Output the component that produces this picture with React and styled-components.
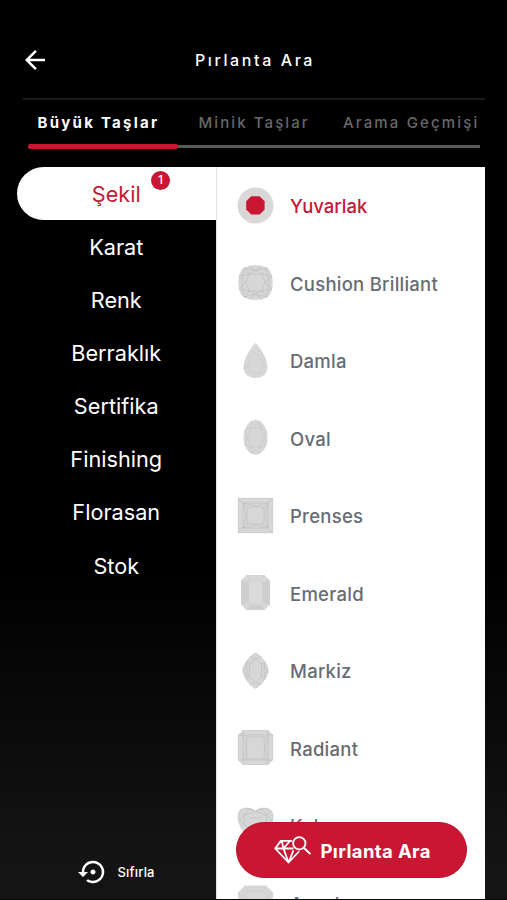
import React from "react";
import styled, { createGlobalStyle, css } from "styled-components";
import { MdArrowBack, MdSettingsBackupRestore } from "react-icons/md";

const RED = "#c91733";

const GlobalStyle = createGlobalStyle`
  * { box-sizing: border-box; }
  html, body { margin: 0; background: #000; overflow: hidden; }
  button { border: 0; padding: 0; background: none; color: inherit; font: inherit; }
`;

const Screen = styled.div`
  width: 100%;
  height: 900px;
  display: flex;
  flex-direction: column;
  overflow: hidden;
  color: #fff;
  background: linear-gradient(#000 0, #000 570px, #141414 860px);
  border-bottom: 1px solid #0a0a0a;
  font-family: Inter, "Liberation Sans", sans-serif;
`;

const Header = styled.header`
  flex: none;
  height: 100px;
  margin: 0 22px 0 23px;
  padding-top: 21px;
  display: grid;
  grid-template-columns: 30px 1fr 30px;
  align-items: center;
  border-bottom: 2px solid #1b1b1b;
`;

const BackButton = styled.button`
  display: flex;
  margin-left: -3px;
`;

const Title = styled.h1`
  margin: 0 -2px 0 0;
  text-align: center;
  font-size: 16px;
  line-height: 20px;
  font-weight: 500;
  letter-spacing: 2.6px;
`;

const Tabs = styled.nav`
  flex: none;
  height: 44px;
  display: flex;
  align-items: center;
  padding: 2px 0 0 37.5px;
`;

const Tab = styled.button`
  flex: none;
  width: ${(p) => p.$width}px;
  text-align: left;
  white-space: nowrap;
  font-size: 15px;
  line-height: 20px;
  font-weight: ${(p) => (p.$active ? 700 : 500)};
  letter-spacing: ${(p) => p.$spacing}px;
  color: ${(p) => (p.$active ? "#fff" : "#686868")};
`;

const TabTrack = styled.div`
  flex: none;
  height: 5px;
  margin: 0 27px 17.5px 28px;
  display: flex;
  align-items: center;
`;

const TabIndicator = styled.div`
  width: 150px;
  height: 5px;
  border-radius: 2px;
  background: ${RED};
`;

const TabRest = styled.div`
  flex: 1;
  height: 2.5px;
  background: #5a5a5a;
`;

const Content = styled.div`
  flex: 1;
  min-height: 0;
  display: grid;
  grid-template-columns: 198.5px 269.5px;
  padding-left: 17px;
`;

const Sidebar = styled.aside`
  display: flex;
  flex-direction: column;
  justify-content: space-between;
`;

const MenuItem = styled.button`
  position: relative;
  display: flex;
  justify-content: center;
  align-items: center;
  width: 100%;
  height: 53.15px;
  padding-top: 1px;
  font-size: 21.7px;
  line-height: 28px;
  ${(p) =>
    p.$active &&
    css`
      color: ${RED};
      background: #fff;
      border-radius: 27px 0 0 27px;
    `}
`;

const Badge = styled.span`
  position: absolute;
  left: 134px;
  top: 4px;
  width: 19px;
  height: 19px;
  border-radius: 50%;
  background: ${RED};
  color: #fff;
  font-size: 12px;
  font-weight: 500;
  line-height: 18px;
  text-align: center;
`;

const ResetButton = styled.button`
  display: flex;
  align-items: center;
  gap: 10px;
  margin: 0 0 12px 60.5px;
  font-size: 13px;
  font-weight: 500;
  letter-spacing: 0.2px;
`;

const ShapePanel = styled.section`
  position: relative;
  overflow: hidden;
  background: #fff;
  border-left: 1px solid #e3e3e3;
`;

const ShapeRow = styled.div`
  display: flex;
  align-items: center;
  gap: 16px;
  height: 77.5px;
  padding-left: 20.5px;
  color: ${(p) => (p.$selected ? RED : "#686c74")};
  font-size: 18.5px;
  font-weight: 500;
  letter-spacing: ${(p) => (p.$selected ? 0 : 0.25)}px;
`;

const ShapeLabel = styled.span`
  padding-top: 2px;
`;

const StoneSvg = styled.svg`
  flex: none;
  width: 37px;
  height: 37px;
  fill: #d7d7d7;
  stroke: #bcbcbc;
  stroke-width: 0.6;
`;

const SearchButton = styled.button`
  position: absolute;
  left: 19.5px;
  bottom: 21px;
  width: 231px;
  height: 56px;
  display: flex;
  align-items: center;
  gap: 9.5px;
  padding-left: 37px;
  border: 1px solid #b8142d;
  border-radius: 28px;
  background: ${RED};
  color: #fff;
  font-size: 18.5px;
  font-weight: 700;
  letter-spacing: 0.37px;
`;

const SearchLabel = styled.span`
  padding-top: 1px;
`;

const drawings = {
  round: (
    <g stroke="none">
      <circle cx="18.5" cy="18.5" r="18" fill="#dad7d8" />
      <path d="m14.2 9.3h8.4l5 5v8.3l-5 5h-8.4l-5-5v-8.3z" fill={RED} />
    </g>
  ),
  cushion: (
    <>
      <path stroke="none" d="M7 3.5Q18.5-1.7 30 3.5Q33.5 6 34.5 10Q37 18.5 34.5 27Q33.5 31 30 33.5Q18.5 38.5 7 33.5Q3.5 31 2.5 27Q0 18.5 2.5 10Q3.5 6 7 3.5Z" />
      <path fill="none" d="M12 10h13l3 8.5-3 8.5H12l-3-8.5zM7 4l5 6L2 12m0 0 7 6.5L2 25l10 2-5 6M30 4l-5 6 10 2-7 6.5 7 6.5-10 2 5 6M12 1.7l6.5 5L25 1.7M12 35.3l6.5-5 6.5 5M7 4l11.5 2.7L30 4M7 33l11.5-2.7L30 33M12 10l6.5-3.3L25 10M12 27l6.5 3.3L25 27M7 4 5 18.5 7 33M30 4l2 14.5L30 33" />
    </>
  ),
  pear: (
    <>
      <path stroke="none" d="M18.5 1C22 4 30.500 16 30.500 25C30.500 32 25.500 36 18.500 36S6.500 32 6.500 25C6.500 16 15 4 18.500 1Z" />
      <path fill="none" opacity=".5" d="m18.500 10-5 6-3 8 4 7h8l4-7-3-8zM10.500 24l-4 2M26.500 24l4 2M13.500 16l-2-4M23.500 16l2-4" />
    </>
  ),
  oval: (
    <>
      <ellipse stroke="none" cx="18.5" cy="18.5" rx="12" ry="17.5" />
      <path fill="none" opacity=".6" d="m14 9h9l4 9.500-4 9.500h-9l-4-9.500zM14 3v6l-6 2 2 7.500L8 26l6 2v6M23 3v6l6 2-2 7.500 2 7.500-6 2v6M14 3l4.500 3L23 3M14 34l4.500-3 4.500 3" />
    </>
  ),
  princess: (
    <>
      <path d="M1.300 1.300h34.400v34.400H1.300z" />
      <path fill="none" d="M6 6h25v25H6zM10 10h17v17H10zM1.300 1.300 12 12M35.700 1.300 25 12M1.300 35.700 12 25M35.700 35.700 25 25M6 6l3 12.500L6 31l12.500-3L31 31l-3-12.500L31 6 18.500 9z" />
    </>
  ),
  emerald: (
    <>
      <path stroke="none" d="M9.500 1h18l5.500 5.500v24L27.500 36h-18L4 30.500v-24z" />
      <path fill="#cecece" stroke="none" d="M11.500 8 4 6.500v24L11.500 29zM25.500 8 33 6.500v24L25.500 29zM12.500 31h12l3 5h-18z" />
      <path fill="#dadada" stroke="#cdcdcd" d="M13 7h11l1.500 2v19L24 30H13l-1.500-2V9zM9.500 1l3.500 6M27.500 1 24 7" />
    </>
  ),
  marquise: (
    <>
      <path d="M18.500 1C24 4 31 12 31 18.500S24 33 18.500 36.500C13 33 6 25 6 18.500S13 4 18.500 1Z" />
      <path fill="none" d="m18.500 7-6 5v13l6 5.500 6-5.500V12zM12.500 12 9 10M24.500 12 28 10M12.500 25 9 27M24.500 25l3.500 2M12.500 4.500l6 2.500 6-2.500M12.500 32.500l6-2 6 2M12.500 12 6 18.500l6.500 6.500M24.500 12l6.500 6.500-6.500 6.500M9 10l1 8.500L9 27M28 10l-1 8.500 1 8.500" />
    </>
  ),
  radiant: (
    <>
      <path d="M6 1.500h25l4.700 4.700v24.600L31 35.500H6l-4.700-4.700V6.200z" />
      <path fill="none" d="M6 6h25v25H6zM9 8h19l-1 3.500.500 7-.500 7 1 4.500H9l1-4.500-.500-7 .500-7zM6 1.500V6L1.300 6.200M31 1.500V6l4.700.2M1.300 30.800 6 31v4.500M35.700 30.800 31 31v4.500M6 6l3.500 12.500L6 31M31 6l-3.500 12.500L31 31" />
    </>
  ),
  heart: (
    <>
      <path d="M18.500 4.500C22 0 33-.5 35.500 6C38 17 29 28 18.500 35.500C8 28-1 17 1.500 6C4-.5 15 0 18.500 4.500Z" />
      <path fill="none" d="m8 8 10.500-3.500L29 8l1 9-11.500 12L7 17zM3 4l5 4-6 5 5 4M34 4l-5 4 6 5-5 4M8 8l4-6 6.500 2.500L25 2l4 6M12 11h13" />
    </>
  ),
  asscher: (
    <>
      <path stroke="none" d="M8 1.500h21l7 7v20l-7 7H8l-7-7v-20z" />
      <path fill="none" opacity=".6" d="M11 7h15l5 5v14l-5 5H11l-5-5V12zM8 1.500 11 7M29 1.500 26 7M1 8.500 6 12M36 8.500 31 12" />
    </>
  ),
};

function Stone({ shape }) {
  return (
    <StoneSvg viewBox="0 0 37 37" aria-hidden="true">
      {drawings[shape]}
    </StoneSvg>
  );
}

function DiamondSearchIcon() {
  return (
    <svg width="37" height="28" viewBox="0 0 37 28" fill="none" stroke="#fff" strokeWidth="1.8" strokeLinejoin="round" strokeLinecap="round" aria-hidden="true">
      <path d="M17.300 4.900H6.800L1.200 12.500 14.500 26.500 24.500 16M1.200 12.500h17.500M9.500 12.500l5 14 4.700-11.500M15.500 5.500 9.500 12.500 7.800 5" />
      <circle cx="25.300" cy="7.300" r="6.200" />
      <path d="m29.800 11.800 6 5.700" strokeWidth="2" />
    </svg>
  );
}

const menu = ["Karat", "Renk", "Berraklık", "Sertifika", "Finishing", "Florasan", "Stok"];

const shapes = [
  ["round", "Yuvarlak"],
  ["cushion", "Cushion Brilliant"],
  ["pear", "Damla"],
  ["oval", "Oval"],
  ["princess", "Prenses"],
  ["emerald", "Emerald"],
  ["marquise", "Markiz"],
  ["radiant", "Radiant"],
  ["heart", "Kalp"],
  ["asscher", "Asscher"],
];

export default function App() {
  return (
    <Screen lang="tr">
      <GlobalStyle />
      <Header>
        <BackButton aria-label="Geri"><MdArrowBack size={30} /></BackButton>
        <Title>Pırlanta Ara</Title>
      </Header>
      <Tabs>
        <Tab $active $width={161} $spacing={2.25}>Büyük Taşlar</Tab>
        <Tab $width={144.5} $spacing={2.1}>Minik Taşlar</Tab>
        <Tab $width={140} $spacing={2.15}>Arama Geçmişi</Tab>
      </Tabs>
      <TabTrack>
        <TabIndicator />
        <TabRest />
      </TabTrack>
      <Content>
        <Sidebar>
          <div>
            <MenuItem $active>Şekil<Badge>1</Badge></MenuItem>
            {menu.map((label) => <MenuItem key={label}>{label}</MenuItem>)}
          </div>
          <ResetButton><MdSettingsBackupRestore size={30} />Sıfırla</ResetButton>
        </Sidebar>
        <ShapePanel>
          {shapes.map(([shape, label], i) => (
            <ShapeRow key={shape} $selected={i === 0}>
              <Stone shape={shape} />
              <ShapeLabel>{label}</ShapeLabel>
            </ShapeRow>
          ))}
          <SearchButton><DiamondSearchIcon /><SearchLabel>Pırlanta Ara</SearchLabel></SearchButton>
        </ShapePanel>
      </Content>
    </Screen>
  );
}
